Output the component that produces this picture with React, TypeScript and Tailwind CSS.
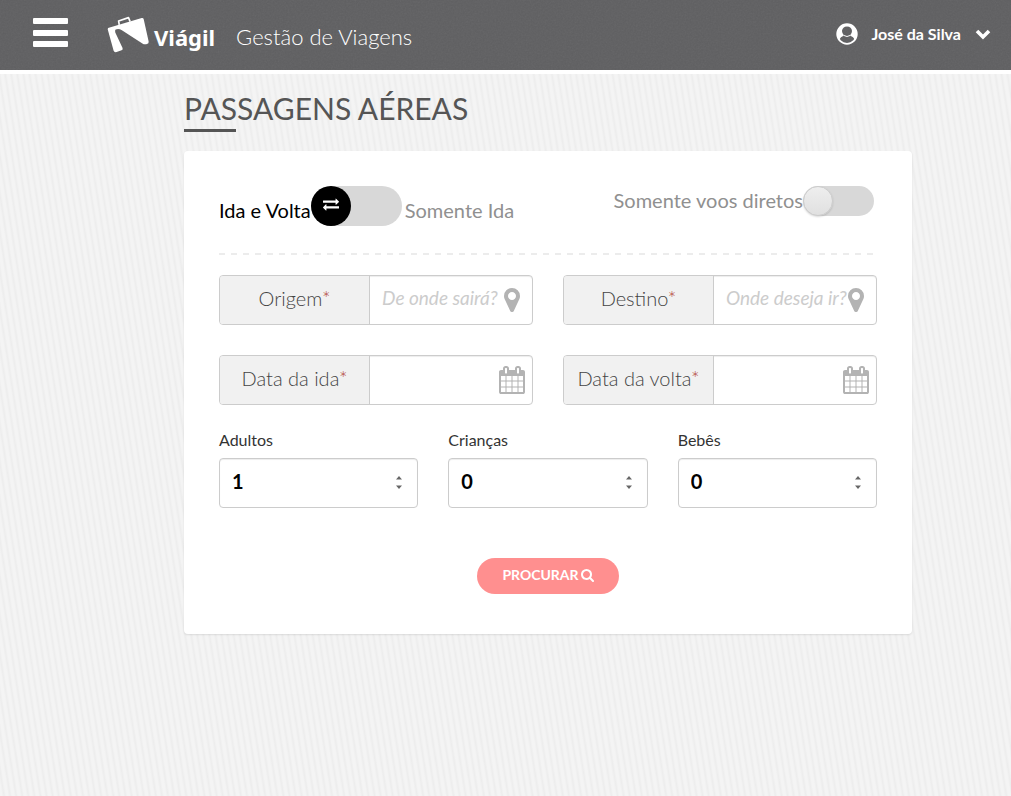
import React, { useState } from "react";

const icons = {
  marker:
    "M768 512q0 106-75 181t-181 75-181-75-75-181 75-181 181-75 181 75 75 181zm256 0q0 109-33 179l-364 774q-16 33-47.5 52t-67.5 19-67.5-19-46.5-52l-365-774q-33-70-33-179 0-212 150-362t362-150 362 150 150 362z",
  calendar:
    "M192 1664h288v-288h-288v288zm352 0h320v-288h-320v288zm-352-352h288v-320h-288v320zm352 0h320v-320h-320v320zm-352-384h288v-288h-288v288zm736 736h320v-288h-320v288zm-384-736h320v-288h-320v288zm768 736h288v-288h-288v288zm-384-352h320v-320h-320v320zm-352-864v-288q0-13-9.5-22.5t-22.5-9.5h-64q-13 0-22.5 9.5t-9.5 22.5v288q0 13 9.5 22.5t22.5 9.5h64q13 0 22.5-9.5t9.5-22.5zm736 864h288v-320h-288v320zm-384-384h320v-288h-320v288zm384 0h288v-288h-288v288zm32-480v-288q0-13-9.5-22.5t-22.5-9.5h-64q-13 0-22.5 9.5t-9.5 22.5v288q0 13 9.5 22.5t22.5 9.5h64q13 0 22.5-9.5t9.5-22.5zm384-64v1280q0 52-38 90t-90 38h-1408q-52 0-90-38t-38-90v-1280q0-52 38-90t90-38h128v-96q0-66 47-113t113-47h64q66 0 113 47t47 113v96h384v-96q0-66 47-113t113-47h64q66 0 113 47t47 113v96h128q52 0 90 38t38 90z",
  exchange:
    "M1792 1184v192q0 13-9.5 22.5t-22.5 9.5h-1376v192q0 13-9.5 22.5t-22.5 9.5q-12 0-24-10l-319-320q-9-9-9-22 0-14 9-23l320-320q9-9 23-9 13 0 22.5 9.5t9.5 22.5v192h1376q13 0 22.5 9.5t9.5 22.5zm0-544q0 14-9 23l-320 320q-9 9-23 9-13 0-22.5-9.5t-9.5-22.5v-192h-1376q-13 0-22.5-9.5t-9.5-22.5v-192q0-13 9.5-22.5t22.5-9.5h1376v-192q0-14 9-23t23-9q12 0 24 10l319 319q9 9 9 23z",
  search:
    "M1152 832q0-185-131.5-316.5T704 384 387.5 515.5 256 832t131.5 316.5T704 1280t316.5-131.5T1152 832zm512 832q0 52-38 90t-90 38q-54 0-90-38l-343-342q-179 124-399 124-143 0-273.5-55.5t-225-150-150-225T0 832t55.5-273.5 150-225 225-150T704 128t273.5 55.5 225 150 150 225T1408 832q0 220-124 399l343 343q37 37 37 90z",
};

const fields = [
  { id: "origem", label: "Origem", placeholder: "De onde sairá?", icon: "marker" },
  { id: "destino", label: "Destino", placeholder: "Onde deseja ir?", icon: "marker" },
  { id: "ida", label: "Data da ida", placeholder: "", icon: "calendar" },
  { id: "volta", label: "Data da volta", placeholder: "", icon: "calendar" },
];

const passengers = [
  { id: "adultos", label: "Adultos", initial: 1 },
  { id: "criancas", label: "Crianças", initial: 0 },
  { id: "bebes", label: "Bebês", initial: 0 },
];

const Logo = () => (
  <a href="#" className="flex text-white" aria-label="Viágil">
    <svg viewBox="0 0 128 112" className="w-[43px] h-[37px]" fill="currentColor">
      <path d="M2 36 L104 6 Q109 5 110 10 L125 77 Q126 83 120 85 Q112 87 106 83 L44 43 Q34 37 25 41 Q22 44 24 50 L46 97 Q48 102 43 104 L28 109 Q21 111 19 105 L1 40 Z" />
      <path d="M36 27 L34 15 L64 5 L69 17" fill="none" stroke="currentColor" strokeWidth="5" strokeLinejoin="round" />
    </svg>
    <span className="ml-1 pt-[6px] font-['Noto_Sans',sans-serif] text-[22px] leading-[30px] font-bold">
      Viágil
    </span>
  </a>
);

const Header = () => (
  <header className="relative flex items-center h-[74px] border-b-4 border-white bg-[#5f5f61] text-white">
    <svg className="absolute inset-0 w-full h-full opacity-8" aria-hidden="true">
      <filter id="grain">
        <feTurbulence type="fractalNoise" baseFrequency="0.6" numOctaves="2" />
        <feColorMatrix type="saturate" values="0" />
      </filter>
      <rect width="100%" height="100%" filter="url(#grain)" />
    </svg>
    <div className="relative flex items-start w-full h-full pl-8 pr-5">
      <button aria-label="Menu" className="mt-[18px] mr-[39px]">
        <svg width="36" height="29" fill="currentColor">
          <rect x="1" y="0" width="35" height="6" rx="1" />
          <rect x="1" y="12" width="35" height="6" rx="1" />
          <rect x="1" y="23" width="35" height="6" rx="1" />
        </svg>
      </button>
      <div className="mt-4">
        <Logo />
      </div>
      <span className="mt-[22px] ml-[21px] text-[22px] leading-[30px] font-light">Gestão de Viagens</span>
      <button className="flex items-center ml-auto mt-[22px] h-6">
        <svg viewBox="0 0 22 22" className="w-[22px] h-[22px] mr-[13px]">
          <circle cx="11" cy="11" r="9.8" fill="none" stroke="currentColor" strokeWidth="1.8" />
          <path
            d="M3 17 Q1 14 1.500 9 Q3 1 11 1 Q19 1 20.500 9 Q21 14 19 17 Q17.500 13.500 14 12.500 Q16 10.500 16 8 Q15.500 3.500 11 3.500 Q6.500 3.500 6 8 Q6 10.500 8 12.500 Q4.500 13.500 3 17z"
            fill="currentColor"
          />
          <path d="M8 12.500 Q11 14.500 14 12.500" fill="none" stroke="currentColor" strokeWidth="1" />
        </svg>
        <span className="text-base font-bold">José da Silva</span>
        <svg viewBox="0 0 16 12" className="w-4 h-3 ml-[14px]">
          <path d="M2 3 L8 9 L14 3" fill="none" stroke="currentColor" strokeWidth="3.600" />
        </svg>
      </button>
    </div>
  </header>
);

const SearchForm = () => {
  const [roundTrip, setRoundTrip] = useState(true);
  const [direct, setDirect] = useState(false);

  return (
    <form
      className="rounded bg-white px-[35px] pt-[35px] pb-10 shadow-[0_1px_2px_rgba(0,0,0,0.1)]"
      onSubmit={(e) => e.preventDefault()}
    >
      <div className="flex items-start justify-between text-xl">
        <label className="flex items-center cursor-pointer">
          <span className={`pt-2 leading-[30px] ${roundTrip ? "text-black" : "text-[#909090]"}`}>
            Ida e Volta
          </span>
          <input
            type="checkbox"
            className="sr-only"
            checked={roundTrip}
            onChange={() => setRoundTrip(!roundTrip)}
          />
          <span className={`flex w-[91px] h-10 rounded-full bg-[#d8d8d8] ${roundTrip ? "" : "justify-end"}`}>
            <span className="flex items-center justify-center w-10 h-10 rounded-full bg-black pb-1 text-white">
              <svg viewBox="0 0 1792 1792" className="w-4 h-4" fill="currentColor">
                <path d={icons.exchange} />
              </svg>
            </span>
          </span>
          <span className={`pt-2 pl-[3px] leading-[30px] ${roundTrip ? "text-[#909090]" : "text-black"}`}>
            Somente Ida
          </span>
        </label>
        <label className="flex items-center mr-[3px] cursor-pointer text-[#909090]">
          <span className="leading-7 pb-[2px]">Somente voos diretos</span>
          <input
            type="checkbox"
            className="sr-only"
            checked={direct}
            onChange={() => setDirect(!direct)}
          />
          <span className={`flex w-[71px] h-[30px] rounded-full bg-[#d8d8d8] ${direct ? "justify-end" : ""}`}>
            <span className="w-[30px] h-[30px] rounded-full border border-[#ccc] bg-linear-to-b from-[#eee] to-[#e0e0e0] shadow-[0_1px_2px_rgba(0,0,0,0.15)]" />
          </span>
        </label>
      </div>

      <div className="h-[2px] mt-[27px] mb-5 bg-[repeating-linear-gradient(90deg,#ececec_0px,#ececec_6px,transparent_6px,transparent_12px)]" />

      <div className="grid grid-cols-2 gap-[30px]">
        {fields.map((field) => (
          <div
            key={field.id}
            className="relative flex h-[50px] overflow-hidden rounded border border-[#ccc] bg-white text-xl shadow-[inset_0_1px_1px_rgba(0,0,0,0.075)]"
          >
            <label
              htmlFor={field.id}
              className="w-[150px] shrink-0 border-r border-[#ccc] bg-[#f1f1f1] text-center leading-[44px] font-light text-[#444]"
            >
              {field.label}
              <span className="text-[#b03a2e]">*</span>
            </label>
            <input
              id={field.id}
              type="text"
              placeholder={field.placeholder}
              className="w-full min-w-0 pl-3 pb-1 text-[19px] text-black outline-none placeholder:italic placeholder:text-[#ccc]"
            />
            <span className="absolute right-[6px] top-[10px] flex items-center justify-center w-7 h-7 text-[#b3b3b3]">
              {field.icon === "marker" ? (
                <svg viewBox="0 0 1024 1536" className="w-4 h-6" fill="currentColor" fillRule="evenodd">
                  <path d={icons.marker} />
                </svg>
              ) : (
                <svg viewBox="0 0 1792 1792" className="w-7 h-7" fill="currentColor">
                  <path d={icons.calendar} />
                </svg>
              )}
            </span>
          </div>
        ))}
      </div>

      <div className="grid grid-cols-3 gap-[30px] mt-[23px]">
        {passengers.map((passenger) => (
          <div key={passenger.id}>
            <label htmlFor={passenger.id} className="block mb-[6px] text-base text-[#333]">
              {passenger.label}
            </label>
            <div className="relative">
              <select
                id={passenger.id}
                defaultValue={passenger.initial}
                className="block w-full h-[50px] appearance-none rounded border border-[#ccc] bg-white pl-3 pb-1 text-xl font-bold text-black shadow-[inset_0_1px_1px_rgba(0,0,0,0.075)]"
              >
                {[...Array(10)].map((_, i) => (
                  <option key={i} value={i}>
                    {i}
                  </option>
                ))}
              </select>
              <svg
                viewBox="0 0 6 13"
                className="absolute right-4 top-[18px] w-[6px] h-[13px] pointer-events-none"
                fill="#666"
              >
                <path d="M0 3.500 L3 0 L6 3.500z M0 9.500 L3 13 L6 9.500z" />
              </svg>
            </div>
          </div>
        ))}
      </div>

      <button
        type="submit"
        className="flex items-center h-9 mt-[50px] mx-auto px-[25px] rounded-full bg-[#ff8f8f] pb-[2px] text-sm font-bold text-white"
      >
        PROCURAR
        <svg viewBox="0 0 1664 1792" className="w-[13px] h-[14px] ml-[2px]" fill="currentColor">
          <path d={icons.search} />
        </svg>
      </button>
    </form>
  );
};

const App = () => {
  return (
    <div className="min-h-screen bg-[repeating-linear-gradient(81deg,#f4f4f4_0px,#f4f4f4_2px,#ededed_4px,#f4f4f4_6px)] font-[Lato,sans-serif]">
      <Header />
      <main className="pl-[85px]">
        <div className="max-w-[728px] mx-auto pt-[15px] pb-10">
          <h1 className="mb-px text-3xl leading-[39px] text-[#555]">PASSAGENS AÉREAS</h1>
          <div className="w-[52px] h-[3px] mb-[19px] bg-[#555]" />
          <SearchForm />
        </div>
      </main>
    </div>
  );
};

export default App;
